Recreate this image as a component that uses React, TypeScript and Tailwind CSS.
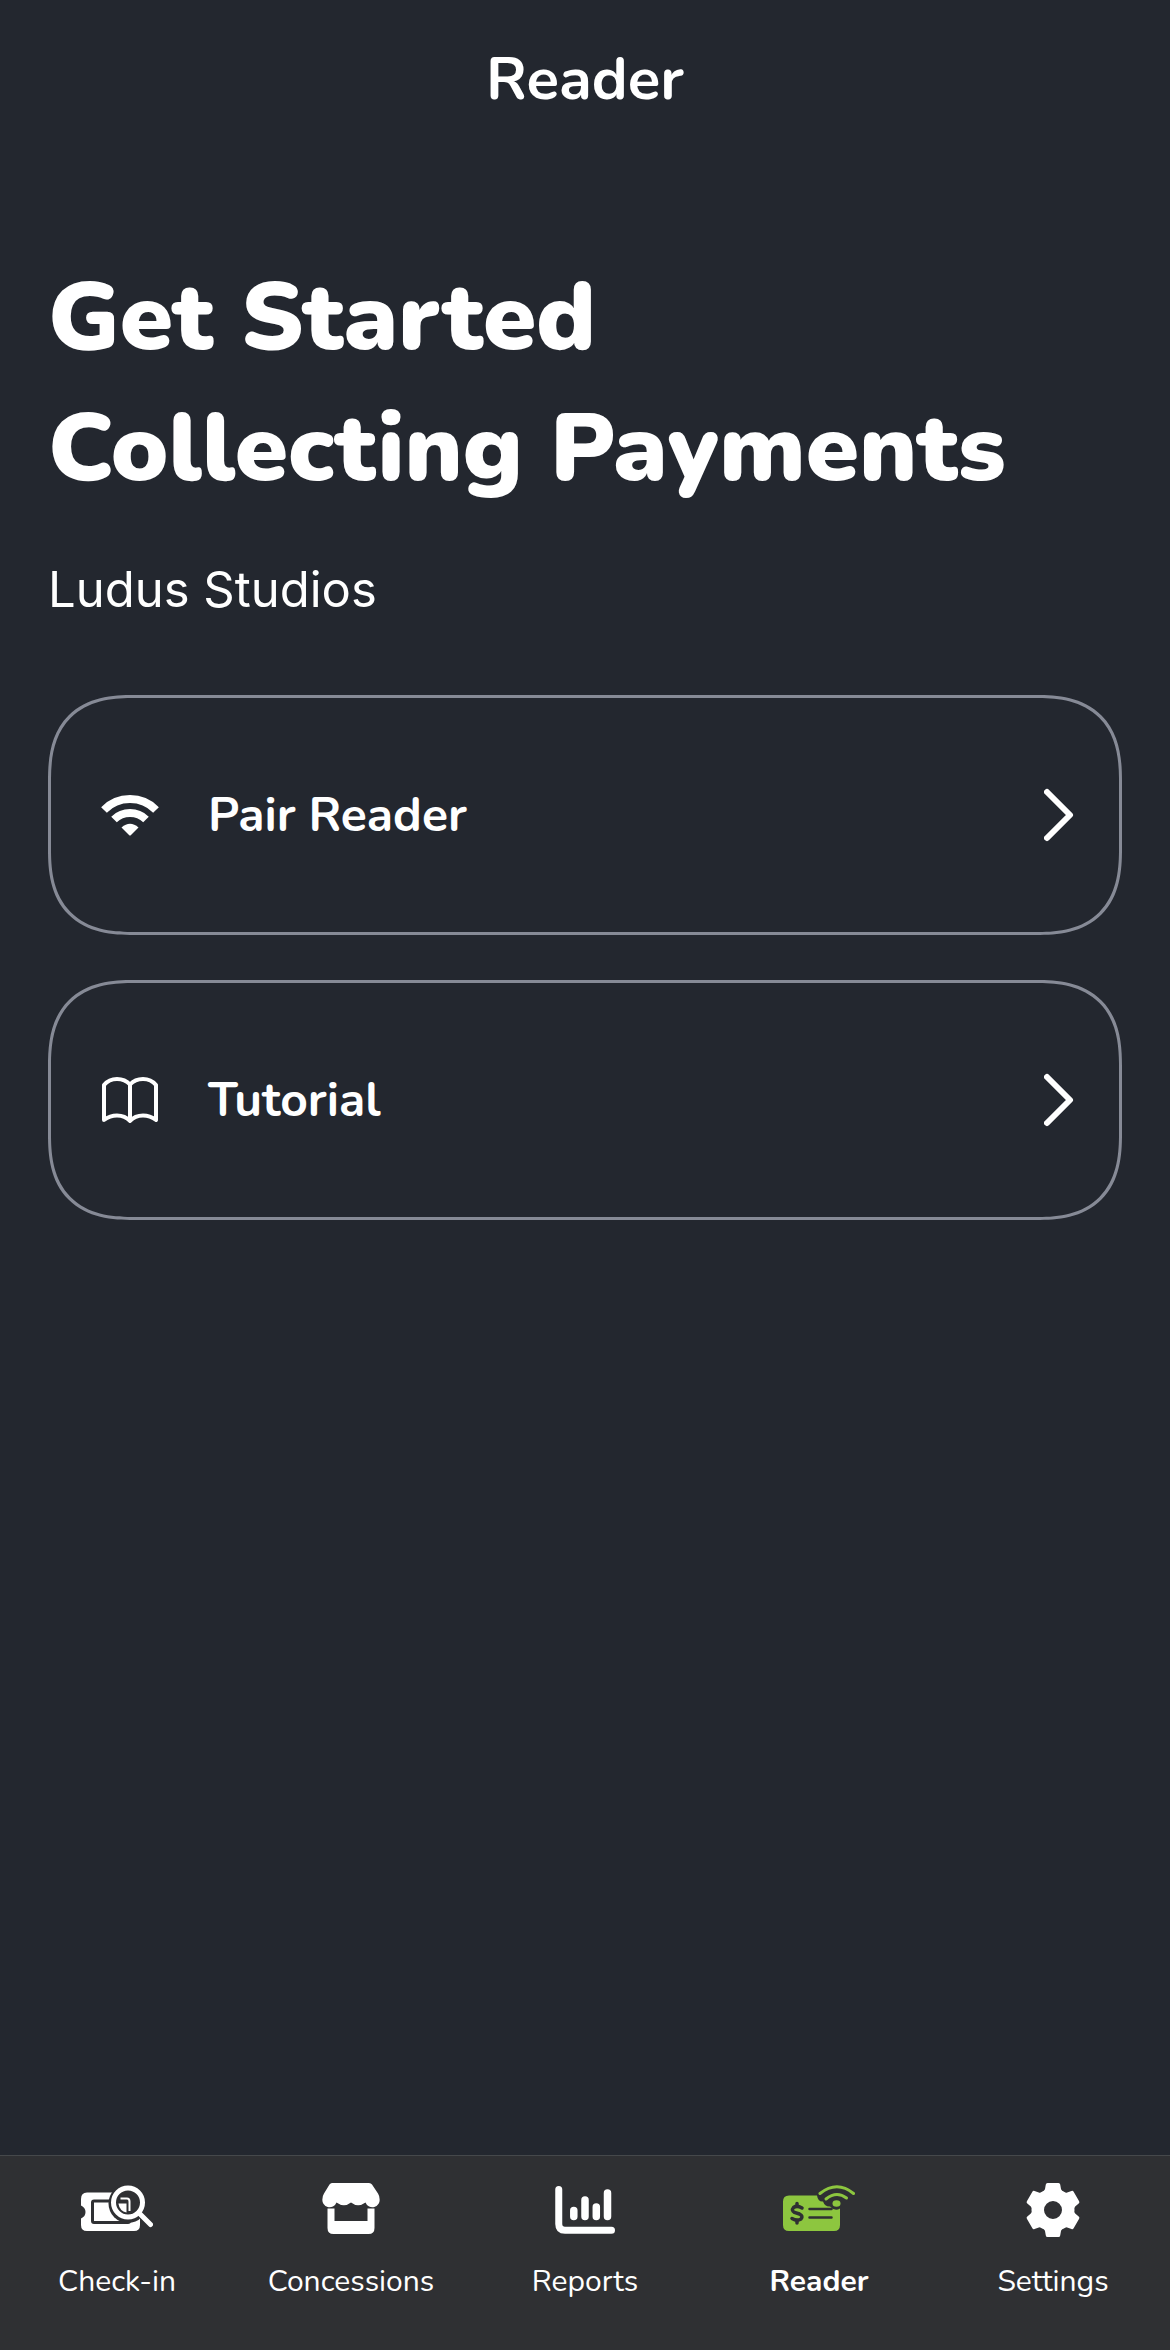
import React from 'react';

const WifiIcon = () => (
    <svg className="w-[58px] h-[42px]" viewBox="0 0 58 42" fill="none" aria-hidden="true">
        <path d="M3 16 A36.500 36.500 0 0 1 55 16" stroke="currentColor" strokeWidth="8" />
        <path d="M13 25.500 A23 23 0 0 1 45 25.500" stroke="currentColor" strokeWidth="8" />
        <path d="M20.500 33.500 Q29 26 37.500 33.500 L30 41 Q29 42 28 41 Z" fill="currentColor" />
    </svg>
);

const BookIcon = () => (
    <svg
        className="w-[56px] h-[46px]"
        viewBox="0 0 56 46"
        fill="none"
        stroke="currentColor"
        strokeWidth="4"
        strokeLinecap="round"
        strokeLinejoin="round"
        aria-hidden="true"
    >
        <path d="M28 7.500 Q23 2 15 2 Q7 2 2 8 V43 Q8 38.500 15 38.500 Q23 38.500 28 44 Q33 38.500 41 38.500 Q48 38.500 54 43 V8 Q49 2 41 2 Q33 2 28 7.500 Z" />
        <path d="M28 7.500 V43" />
    </svg>
);

const ChevronIcon = () => (
    <svg className="w-[30px] h-[54px]" viewBox="0 0 30 54" fill="none" aria-hidden="true">
        <path d="M3 4 L26 27 L3 50" stroke="currentColor" strokeWidth="6" strokeLinecap="round" strokeLinejoin="round" />
    </svg>
);

const CheckInIcon = () => (
    <svg className="w-[72px] h-[54px]" viewBox="0 0 72 54" fill="none" aria-hidden="true">
        <path
            d="M6 9.500 H53 Q59 9.500 59 16 V42 Q59 48 53 48 H6 Q0 48 0 42 V35.500 Q4.500 33.500 4.500 29 Q4.500 24.500 0 22.500 V16 Q0 9.500 6 9.500 Z"
            fill="#fff"
        />
        <rect x="11.500" y="18" width="37" height="21.500" rx="1.500" stroke="#2f3033" strokeWidth="3" />
        <circle cx="47" cy="20.500" r="19.500" fill="#2f3033" />
        <path d="M59 31 L69.500 41.500" stroke="#fff" strokeWidth="5" strokeLinecap="round" />
        <circle cx="47" cy="19.500" r="14.500" stroke="#fff" strokeWidth="5" />
        <path d="M37.500 20.500 H45.500 V29.500 A10.500 10.500 0 0 1 37.500 21 Z" fill="#fff" />
        <path d="M39.500 15.500 H46 Q48.500 15.500 48.500 18.500 V28" stroke="#fff" strokeWidth="2" />
    </svg>
);

const ConcessionsIcon = () => (
    <svg className="w-[58px] h-[54px]" viewBox="0 0 58 54" fill="currentColor" aria-hidden="true">
        <path d="M10 0 H47 Q49 0 50 1.500 L56 10.500 Q57.500 13 57.500 15.500 A7.300 7.300 0 0 1 43.500 19.500 Q36 25 29 19.500 Q22 25 14.500 19.500 A7.300 7.300 0 0 1 .5 15.500 Q.5 13 2 10.500 L7.500 1.500 Q8.500 0 10 0 Z" />
        <path d="M5.500 25.500 H12.500 V38 H45.500 V25.500 H52.500 V45 Q52.500 51 46.500 51 H11.500 Q5.500 51 5.500 45 Z" />
    </svg>
);

const ReportsIcon = () => (
    <svg className="w-[60px] h-[54px]" viewBox="0 0 60 54" fill="none" stroke="currentColor" strokeLinecap="round" aria-hidden="true">
        <path d="M3.750 6.500 V41 Q3.750 47.250 10 47.250 H56.500" strokeWidth="7" />
        <path d="M18.800 27.500 V33.500 M30 17 V33.500 M41.300 24 V33.500 M52.500 10 V33.500" strokeWidth="7.500" />
    </svg>
);

const ReaderIcon = () => (
    <svg className="w-[72px] h-[54px]" viewBox="0 0 72 54" fill="none" strokeLinecap="round" aria-hidden="true">
        <path d="M6 12.500 H34 Q35 19 40 18.500 Q42 24 47 23.500 Q52 29 57 25.500 V42 Q57 48 51 48 H6 Q0 48 0 42 V18.500 Q0 12.500 6 12.500 Z" fill="#8dc63f" />
        <path d="M26.500 26 H48.500 M26.500 34.500 H48.500" stroke="#2f3033" strokeWidth="2.500" />
        <path d="M19 25 Q14 22 10.500 24.500 Q8 27.500 11.500 29.500 L16.500 31 Q20.500 33 18 36 Q14 38.500 9 35.500" stroke="#2f3033" strokeWidth="3.500" />
        <path d="M14 20.500 V23 M14 37.500 V40" stroke="#2f3033" strokeWidth="3.500" />
        <path d="M37 10.500 Q54 -3 70.500 10.500" stroke="#8dc63f" strokeWidth="3" />
        <path d="M43 16 Q53.500 7.500 63.500 15" stroke="#8dc63f" strokeWidth="3" />
        <ellipse cx="53.500" cy="20.500" rx="4" ry="3.200" fill="#8dc63f" />
    </svg>
);

const SettingsIcon = () => (
    <svg className="w-[54px] h-[54px]" viewBox="-27 -27 54 54" fill="currentColor" aria-hidden="true">
        <path d="M0 -21.500 A21.500 21.500 0 1 1 0 21.500 A21.500 21.500 0 1 1 0 -21.500 Z M0 -9 A9 9 0 1 0 0 9 A9 9 0 1 0 0 -9 Z" />
        {[0, 60, 120, 180, 240, 300].map((angle) => (
            <path
                key={angle}
                transform={`rotate(${angle})`}
                d="M-10.500 -18 Q-8.500 -19 -8 -21 L-7.200 -25.500 Q-7 -27 -5.500 -27 H5.500 Q7 -27 7.200 -25.500 L8 -21 Q8.500 -19 10.500 -18 Z"
            />
        ))}
    </svg>
);

const opcoes = [
    { label: 'Pair Reader', icon: <WifiIcon /> },
    { label: 'Tutorial', icon: <BookIcon /> },
];

const tabs = [
    { label: 'Check-in', icon: <CheckInIcon />, active: false },
    { label: 'Concessions', icon: <ConcessionsIcon />, active: false },
    { label: 'Reports', icon: <ReportsIcon />, active: false },
    { label: 'Reader', icon: <ReaderIcon />, active: true },
    { label: 'Settings', icon: <SettingsIcon />, active: false },
];

const App = () => {
    return (
        <div className="min-h-screen flex flex-col bg-[#23272f] text-white font-['Nunito','Noto_Sans',sans-serif]">
            <header className="h-[158px] flex items-center justify-center">
                <h1 className="text-[60px] leading-[80px] font-bold">Reader</h1>
            </header>

            <main className="flex-1 flex flex-col px-12 pt-[94px]">
                <h2 className="text-[96px] leading-[131px] font-black">
                    Get Started
                    <br />
                    Collecting Payments
                </h2>
                <p className="mt-[38px] text-[49px] leading-[76px] font-['Inter',sans-serif]">Ludus Studios</p>

                <div className="mt-[67px] flex flex-col gap-[45px]">
                    {opcoes.map((item) => (
                        <button
                            key={item.label}
                            type="button"
                            className="h-[240px] w-full flex items-center px-[45px] border-3 border-[#868a96] rounded-[86px] [corner-shape:superellipse(1.35)] text-left"
                        >
                            <span className="w-[68px] flex justify-center">{item.icon}</span>
                            <span className="ml-11 flex-1 text-[48px] leading-[64px] font-bold">{item.label}</span>
                            <ChevronIcon />
                        </button>
                    ))}
                </div>
            </main>

            <nav className="h-[195px] grid grid-cols-5 bg-[#2f3033] border-t border-[#45484b]">
                {tabs.map((tab) => (
                    <a key={tab.label} href="#" className="flex flex-col items-center pt-[27px]">
                        <span className="h-[54px] flex items-center">{tab.icon}</span>
                        <span className={`mt-6 text-[30px] leading-[42px] ${tab.active ? 'font-bold' : 'font-normal'}`}>
                            {tab.label}
                        </span>
                    </a>
                ))}
            </nav>
        </div>
    );
};

export default App;
